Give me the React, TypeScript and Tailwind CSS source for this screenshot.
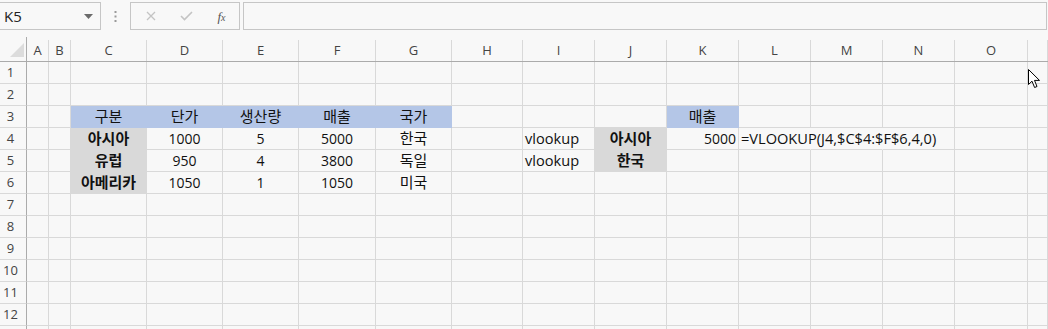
import React from "react";

const COLS = ["A", "B", "C", "D", "E", "F", "G", "H", "I", "J", "K", "L", "M", "N", "O", ""];

type Cell = {
  t?: string;
  ko?: boolean;
  bold?: boolean;
  align?: "c" | "l" | "r";
  fill?: "blue" | "gray";
  noRight?: boolean;
  overflow?: boolean;
  wide?: boolean;
};

const data: Record<string, Cell> = {
  C3: { t: "구분", ko: true, fill: "blue" },
  D3: { t: "단가", ko: true, fill: "blue" },
  E3: { t: "생산량", ko: true, fill: "blue" },
  F3: { t: "매출", ko: true, fill: "blue" },
  G3: { t: "국가", ko: true, fill: "blue" },
  K3: { t: "매출", ko: true, fill: "blue" },
  C4: { t: "아시아", ko: true, bold: true, fill: "gray" },
  D4: { t: "1000" },
  E4: { t: "5" },
  F4: { t: "5000" },
  G4: { t: "한국", ko: true },
  C5: { t: "유럽", ko: true, bold: true, fill: "gray" },
  D5: { t: "950" },
  E5: { t: "4" },
  F5: { t: "3800" },
  G5: { t: "독일", ko: true },
  C6: { t: "아메리카", ko: true, bold: true, fill: "gray" },
  D6: { t: "1050" },
  E6: { t: "1" },
  F6: { t: "1050" },
  G6: { t: "미국", ko: true },
  I4: { t: "vlookup", align: "l", wide: true },
  I5: { t: "vlookup", align: "l", wide: true },
  J4: { t: "아시아", ko: true, bold: true, fill: "gray" },
  J5: { t: "한국", ko: true, bold: true, fill: "gray" },
  K4: { t: "5000", align: "r" },
  L4: { t: "=VLOOKUP(J4,$C$4:$F$6,4,0)", align: "l", overflow: true, noRight: true, wide: true },
  M4: { noRight: true },
};

function GridCell({ id }: { id: string }) {
  const c = data[id] || {};
  const fillCls =
    c.fill === "blue"
      ? "bg-[#b4c6e7] border-[#b4c6e7]"
      : c.fill === "gray"
      ? "bg-[#d9d9d9] border-[#d9d9d9]"
      : "border-[#d9d9d9]";
  const rightCls = c.noRight ? "border-r-transparent" : "";
  const alignCls =
    c.align === "l"
      ? "justify-start pl-[2px]"
      : c.align === "r"
      ? "justify-end pr-[2px]"
      : "justify-center";
  const fontCls = c.ko ? "text-[15px]" : c.wide ? "text-[14.6px]" : "text-[14px]";
  return (
    <div
      className={`relative flex h-[22px] items-center border-r border-b ${fillCls} ${rightCls} ${alignCls} ${
        c.overflow ? "overflow-visible z-10" : "overflow-hidden"
      }`}
    >
      {c.t && (
        <span
          className={`whitespace-nowrap leading-none text-[#111] ${fontCls} ${c.bold ? "font-bold" : ""}`}
        >
          {c.t}
        </span>
      )}
    </div>
  );
}

export default function App() {
  const rows = Array.from({ length: 13 }, (_, i) => i + 1);
  return (
    <div
      className="relative h-[329px] w-[1048px] overflow-hidden bg-[#f8f8f8] text-[#222]"
      style={{ fontFamily: '"Open Sans", "Noto Sans CJK KR", sans-serif' }}
    >
      {/* toolbar */}
      <div className="flex h-[37px] items-start pt-[2px]">
        <div className="flex h-[28px] w-[101px] items-center justify-between border border-l-0 border-[#c6c6c6] pl-[4px] pr-[7px]">
          <span className="text-[15px] leading-none text-[#222]">K5</span>
          <svg width="9" height="5" viewBox="0 0 9 5">
            <path d="M0 0 L9 0 L4.5 5 Z" fill="#6b6b6b" />
          </svg>
        </div>
        <div className="flex h-[28px] w-[29px] items-center justify-center">
          <svg width="3" height="11" viewBox="0 0 3 11">
            <rect x="0.5" y="0" width="2" height="2" fill="#9a9a9a" />
            <rect x="0.5" y="4.5" width="2" height="2" fill="#9a9a9a" />
            <rect x="0.5" y="9" width="2" height="2" fill="#9a9a9a" />
          </svg>
        </div>
        <div className="flex h-[28px] w-[110px] items-center border border-[#c6c6c6]">
          <div className="flex w-[37px] justify-center pl-[3px]">
            <svg width="10" height="10" viewBox="0 0 10 10">
              <path d="M1 1 L9 9 M9 1 L1 9" stroke="#c4c4c4" strokeWidth="1.3" />
            </svg>
          </div>
          <div className="flex w-[36px] justify-center">
            <svg width="13" height="10" viewBox="0 0 13 10">
              <path d="M1 5 L4.5 8.5 L12 1" stroke="#c4c4c4" strokeWidth="1.6" fill="none" />
            </svg>
          </div>
          <div className="flex w-[35px] justify-center">
            <span
              className="text-[13px] italic leading-none text-[#555]"
              style={{ fontFamily: '"Liberation Serif", serif' }}
            >
              f<span className="text-[10px]">x</span>
            </span>
          </div>
        </div>
        <div className="ml-[3px] h-[28px] w-[804px] border border-[#c6c6c6]" />
      </div>

      {/* grid */}
      <div className="grid grid-cols-[27px_22px_22px_76px_76px_76px_77px_76px_71px_72px_72px_72px_72px_72px_72px_73px_1fr]">
        <div className="relative h-[25px] border-r border-b border-[#ababab]">
          <svg className="absolute left-[10px] top-[6px]" width="14" height="14" viewBox="0 0 14 14">
            <path d="M14 0 L14 14 L0 14 Z" fill="#dcdcdc" />
          </svg>
        </div>
        {COLS.map((c, i) => (
          <div key={i} className="flex h-[25px] items-end border-b border-[#ababab]">
            <div className="flex h-[21px] w-full items-center justify-center border-r border-[#d9d9d9] pb-[1px]">
              <span className="text-[13px] leading-none text-[#444]">{c}</span>
            </div>
          </div>
        ))}
        {rows.map((r) => (
          <React.Fragment key={r}>
            <div className="flex h-[22px] items-center justify-center border-r border-b border-r-[#ababab] border-b-[#d9d9d9] pr-[5px]">
              {r <= 12 && <span className="text-[13px] leading-none text-[#444]">{r}</span>}
            </div>
            {COLS.map((c, i) => (
              <GridCell key={i} id={c ? `${c}${r}` : `P${r}`} />
            ))}
          </React.Fragment>
        ))}
      </div>

      {/* mouse cursor */}
      <svg className="absolute left-[1028px] top-[69px]" width="13" height="20" viewBox="0 0 13 20">
        <path
          d="M0.5 0.5 L0.5 15.5 L4 12.2 L6.6 18.5 L9 17.5 L6.5 11.4 L11.5 11.4 Z"
          fill="#fff"
          stroke="#000"
          strokeWidth="1"
          strokeLinejoin="round"
        />
      </svg>
    </div>
  );
}
